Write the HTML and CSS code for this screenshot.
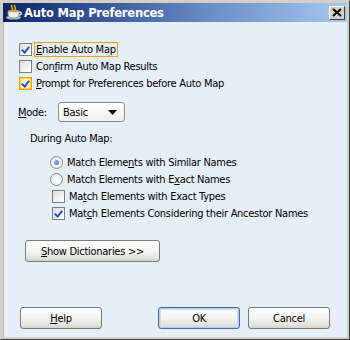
FILE: index.html
```html
<!DOCTYPE html>
<html>
<head>
<meta charset="utf-8">
<link rel="stylesheet" href="styles.css">
</head>
<body>
<div class="window">
  <div class="titlebar">
    <svg class="appicon" width="18" height="16" viewBox="0 0 18 16">
      <path d="M7 1 C5 3 9 4 7 6 M10 1 C8 3 12 4 10 6" stroke="#F4B400" stroke-width="1.5" fill="none"/>
      <ellipse cx="8.5" cy="13.5" rx="7.5" ry="2" fill="#B8B8B8"/>
      <path d="M3 7 H14 V10 C14 13 12 14 8.5 14 C5 14 3 13 3 10 Z" fill="#F2F2F2" stroke="#8A8A8A" stroke-width="0.8"/>
      <path d="M14 8 C17 8 17 11 14 11" stroke="#E0E0E0" stroke-width="1.4" fill="none"/>
      <ellipse cx="8.5" cy="7" rx="5.5" ry="1.2" fill="#C9A14A"/>
    </svg>
    <span class="title">Auto Map Preferences</span>
    <span class="close"><svg width="10" height="9" viewBox="0 0 10 9"><path d="M1 1 L9 8 M9 1 L1 8" stroke="#000" stroke-width="2"/></svg></span>
  </div>
  <div class="content">
    <div class="checks">
      <div class="row"><span class="cb checked"></span><span class="lbl focus"><u>E</u>nable Auto Map</span></div>
      <div class="row"><span class="cb"></span><span class="lbl">Con<u>f</u>irm Auto Map Results</span></div>
      <div class="row"><span class="cb checked hot"></span><span class="lbl"><u>P</u>rompt for Preferences before Auto Map</span></div>
    </div>
    <div class="moderow">
      <span class="modelbl"><u>M</u>ode:</span>
      <span class="select"><span>Basic</span><svg width="9" height="5" viewBox="0 0 9 5"><path d="M0 0 H9 L4.5 5 Z" fill="#000"/></svg></span>
    </div>
    <div class="during">During Auto Map:</div>
    <div class="options">
      <div class="row"><span class="rb on"></span><span class="lbl r">Match Eleme<u>n</u>ts with Similar Names</span></div>
      <div class="row"><span class="rb"></span><span class="lbl r">Match Elements with E<u>x</u>act Names</span></div>
      <div class="row ind"><span class="cb"></span><span class="lbl">Ma<u>t</u>ch Elements with Exact Types</span></div>
      <div class="row ind"><span class="cb checked"></span><span class="lbl">Mat<u>c</u>h Elements Considering their Ancestor Names</span></div>
    </div>
    <div class="dictrow"><button class="btn dict"><u>S</u>how Dictionaries &gt;&gt;</button></div>
    <div class="footer">
      <button class="btn"><u>H</u>elp</button>
      <span class="spacer"></span>
      <button class="btn default">OK</button>
      <button class="btn">Cancel</button>
    </div>
  </div>
</div>
</body>
</html>
```
FILE: styles.css
```css
* { box-sizing: border-box; }
html, body { margin: 0; padding: 0; }
body { width: 350px; height: 340px; overflow: hidden; font-family: "DejaVu Sans Condensed", "DejaVu Sans", sans-serif; font-size: 11px; letter-spacing: -0.28px; color: #000; }

.window {
  width: 350px; height: 340px;
  background: #D4D0C8;
  border-left: 1px solid #D4D0C8; border-top: 1px solid #D4D0C8;
  border-right: 1px solid #404040; border-bottom: 1px solid #404040;
  padding: 0;
  display: flex; flex-direction: column;
}
.window > * { margin: 0 1px; }
.titlebar {
  margin-top: 2px;
  margin-left: 2px; margin-right: 2px;
  height: 19px;
  background: linear-gradient(to right, #0A246A 0%, #3A5A9A 30%, #6A8CC8 60%, #A6CAF0 100%);
  display: flex; align-items: center;
  padding-left: 2px; padding-right: 2px;
}
.appicon { flex: none; margin-right: 1px; margin-top: -1px; }
.title { color: #fff; font-family: "DejaVu Sans", sans-serif; font-weight: bold; font-size: 11.5px; letter-spacing: -0.2px; flex: 1; }
.close {
  width: 16px; height: 14px; background: #D4D0C8;
  border: 1px solid; border-color: #fff #404040 #404040 #fff;
  display: flex; align-items: center; justify-content: center;
}
.content {
  flex: 1;
  margin: 0 2px 2px 2px;
  background: #E6EEF6;
  border-left: 1px solid #B8B4AC;
  padding: 19px 0 0 15px;
  display: flex; flex-direction: column;
}
.row { display: flex; align-items: center; height: 17px; }
.cb {
  width: 13px; height: 13px; flex: none;
  border: 1px solid #7F7F7F;
  background: linear-gradient(135deg, #DCDCD7 0%, #FFFFFF 90%);
  position: relative;
}
.cb.checked::after {
  content: ""; position: absolute; left: 3px; top: 1px;
  width: 3px; height: 6px;
  border: solid #2152C4; border-width: 0 2px 2px 0;
  transform: rotate(40deg);
}
.cb.hot { border-color: #F0A000; box-shadow: inset 0 0 0 1px #FFD040; background: #FFF4C0; }
.lbl { margin-left: 3px; padding: 0 1px; line-height: 13px; }
.lbl.focus { outline: 1px solid #F4A21A; outline-offset: 0; padding: 0 1px; }
.moderow { display: flex; align-items: center; margin-top: 10px; margin-left: -1px; height: 20px; }
.modelbl { width: 40px; }
.select {
  width: 67px; height: 20px;
  border: 1px solid #8A8E96; border-radius: 3px;
  background: linear-gradient(#FFFFFF, #F0F0EC);
  display: flex; align-items: center; justify-content: space-between;
  padding: 0 7px 0 4px;
}
.during { margin-top: 10px; margin-left: 11px; }
.options { margin-top: 9px; margin-left: 31px; }
.rb {
  width: 13px; height: 13px; flex: none; border-radius: 50%;
  border: 1px solid #7F8A98;
  background: radial-gradient(circle at 60% 60%, #fff 0%, #E8E8E4 100%);
  position: relative;
}
.rb.on::after {
  content: ""; position: absolute; left: 3px; top: 3px; width: 5px; height: 5px; border-radius: 50%;
  background: radial-gradient(circle at 35% 35%, #A0C0F8, #2450C8);
}
.lbl.r { margin-left: 3px; }
.row.ind { margin-left: 2px; }
.dictrow { margin-top: 18px; margin-left: 6px; }
.btn {
  font-family: inherit; font-size: 11px; letter-spacing: -0.28px; color: #000;
  height: 22px; width: 82px;
  border: 1px solid #7A7A7A; border-radius: 3px;
  background: linear-gradient(#FFFFFF 0%, #F4F4F0 50%, #E4E4DE 85%, #D4D4CC 100%);
  padding: 0; margin: 0;
}
.btn.dict { width: 135px; }
.btn.default { box-shadow: inset 0 0 0 1px #B8CCF0, inset 0 0 0 2px #D0DCF4; border-color: #4A6A9A; }
.footer { display: flex; margin-top: auto; margin-bottom: 8px; gap: 8px; margin-left: 1px; margin-right: 17px; }
.spacer { flex: 1; }
```
